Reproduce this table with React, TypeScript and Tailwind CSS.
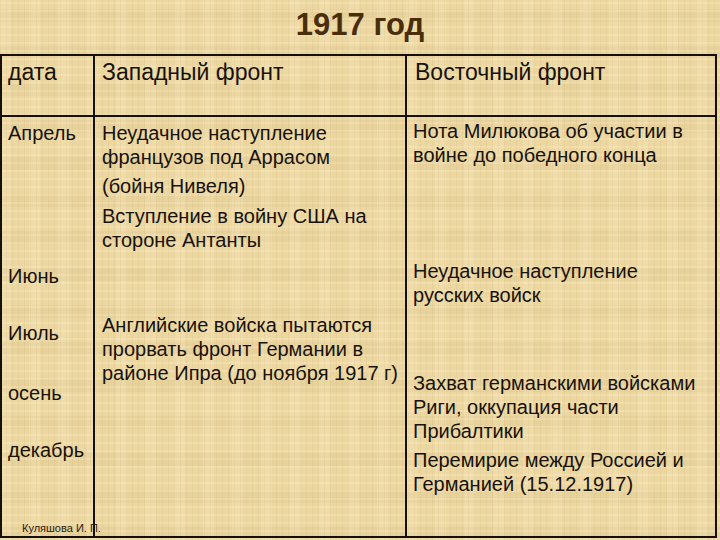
export default function App() {
    return (
        <div className="relative w-[720px] h-[540px] overflow-hidden bg-[#ecd7a1] bg-[image:repeating-linear-gradient(90deg,rgba(140,95,30,0.05)_0px,rgba(140,95,30,0.05)_1px,transparent_1px,transparent_6px),repeating-linear-gradient(0deg,rgba(255,246,215,0.22)_0px,rgba(255,246,215,0.22)_2px,transparent_2px,transparent_8px),repeating-linear-gradient(90deg,rgba(255,245,210,0.16)_0px,rgba(255,245,210,0.16)_11px,transparent_11px,transparent_29px),repeating-linear-gradient(0deg,rgba(150,105,35,0.05)_0px,rgba(150,105,35,0.05)_13px,transparent_13px,transparent_37px)] font-['Liberation_Sans',Arial,sans-serif] text-[#17120a]">
            {/* Title */}
            <h1 className="h-[54px] pt-[9px] text-center text-[31px] leading-[31px] font-bold text-[#4a2e0c]">
                1917 год
            </h1>

            {/* Table */}
            <div className="w-[717px] h-[484px] border-2 border-[#15110a] flex flex-col">
                <div className="flex h-[61px] border-b-2 border-[#15110a] text-[23px] leading-[26px]">
                    <div className="w-[93px] border-r-2 border-[#15110a] pl-[6px] pt-[3px]">дата</div>
                    <div className="w-[312px] border-r-2 border-[#15110a] pl-[7px] pt-[3px]">Западный фронт</div>
                    <div className="flex-1 pl-[8px] pt-[3px]">Восточный фронт</div>
                </div>

                <div className="flex flex-1 text-[20px] leading-[24px] whitespace-nowrap">
                    <div className="w-[93px] border-r-2 border-[#15110a] pl-[6px] flex flex-col">
                        <p className="mt-[4px]">Апрель</p>
                        <p className="mt-[119px]">Июнь</p>
                        <p className="mt-[33px]">Июль</p>
                        <p className="mt-[36px]">осень</p>
                        <p className="mt-[33px]">декабрь</p>
                    </div>

                    <div className="w-[312px] border-r-2 border-[#15110a] pl-[7px] flex flex-col">
                        <p className="mt-[4px]">
                            Неудачное наступление
                            <br />
                            французов под Аррасом
                        </p>
                        <p className="mt-[5px]">(бойня Нивеля)</p>
                        <p className="mt-[6px]">
                            Вступление в войну США на
                            <br />
                            стороне Антанты
                        </p>
                        <p className="mt-[61px]">
                            Английские войска пытаются
                            <br />
                            прорвать фронт Германии в
                            <br />
                            районе Ипра (до ноября 1917 г)
                        </p>
                    </div>

                    <div className="flex-1 pl-[6px] flex flex-col">
                        <p className="mt-[2px]">
                            Нота Милюкова об участии в
                            <br />
                            войне до победного конца
                        </p>
                        <p className="mt-[92px]">
                            Неудачное наступление
                            <br />
                            русских войск
                        </p>
                        <p className="mt-[64px]">
                            Захват германскими войсками
                            <br />
                            Риги, оккупация части
                            <br />
                            Прибалтики
                        </p>
                        <p className="mt-[5px]">
                            Перемирие между Россией и
                            <br />
                            Германией (15.12.1917)
                        </p>
                    </div>
                </div>
            </div>

            {/* Author stamp */}
            <div className="absolute left-[22px] top-[522px] text-[11px] leading-[13px] text-[#2a2010]">Куляшова И. П.</div>
        </div>
    )
}
